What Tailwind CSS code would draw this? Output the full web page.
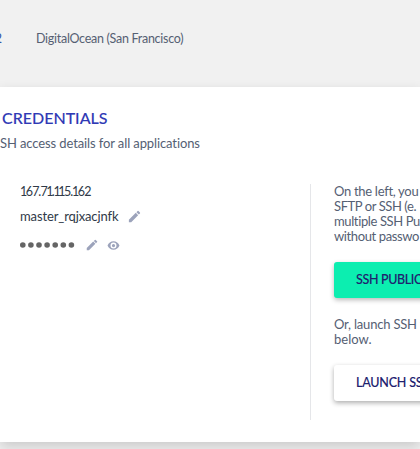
<!DOCTYPE html>
<html lang="en">
<head>
<meta charset="utf-8">
<title>Master Credentials</title>
<script src="https://cdn.jsdelivr.net/npm/@tailwindcss/browser@4"></script>
</head>
<body class="h-[449px] w-[420px] overflow-hidden bg-[#f1f1f1] font-['Lato',sans-serif] text-[13px] leading-[15px] whitespace-nowrap text-[#556073]">
<div class="flex h-screen flex-col overflow-hidden">
  <header class="flex h-[87px] shrink-0 pt-[31px]">
    <div class="flex w-[2px] justify-end text-[#3456a8]">2</div>
    <div class="ml-[34px] text-[12.5px] tracking-[-0.28px]">DigitalOcean (San Francisco)</div>
  </header>
  <main class="h-[355px] shrink-0 bg-white pt-[21px] shadow-[0_5px_12px_rgba(0,0,0,0.16)]">
    <h1 class="ml-[2px] text-[16px] leading-5 font-medium text-[#2f39b5] [-webkit-text-stroke:0.1px_#2f39b5]">CREDENTIALS</h1>
    <p class="mt-[8px] tracking-[-0.11px]">SH access details for all applications</p>
    <div class="mt-[33px] flex h-[236px]">
      <section class="w-[310px] shrink-0 pl-5 text-[#303a48]">
        <div class="h-[25px] text-[12.5px] tracking-[-0.8px]"><span class="tracking-[-1.5px]">1</span>6<span class="tracking-[-1.2px]">7</span>.<span class="tracking-[-1.5px]">7</span><span class="tracking-[-1.7px]">1</span><span class="tracking-[-1.2px]">.</span><span class="tracking-[-2.4px]">1</span><span class="tracking-[-1.7px]">1</span>5<span class="tracking-[-1.2px]">.</span><span class="tracking-[-1.5px]">1</span>62</div>
        <div class="flex h-[28px]">
          <span class="tracking-[-0.12px]">master_rqjxacjnfk</span>
          <svg class="ml-[9px] size-[15px] text-[#9ca3bb]" viewBox="0 0 24 24" fill="currentColor"><path d="M3 17.25V21h3.75L17.81 9.94l-3.75-3.75zM20.71 7.04a1 1 0 0 0 0-1.41l-2.34-2.34a1 1 0 0 0-1.41 0l-1.83 1.83 3.75 3.75z"/></svg>
        </div>
        <div class="flex h-4 items-center">
          <svg class="h-[6px] w-[56px]" viewBox="0 0 56 6" fill="#656565"><circle cx="2.8" cy="3" r="2.8"/><circle cx="10.9" cy="3" r="2.8"/><circle cx="19" cy="3" r="2.8"/><circle cx="27.1" cy="3" r="2.8"/><circle cx="35.2" cy="3" r="2.8"/><circle cx="43.3" cy="3" r="2.8"/><circle cx="51.4" cy="3" r="2.8"/></svg>
          <svg class="ml-[9px] size-[14px] text-[#9ca3bb]" viewBox="0 0 24 24" fill="currentColor"><path d="M3 17.25V21h3.75L17.81 9.94l-3.75-3.75zM20.71 7.04a1 1 0 0 0 0-1.41l-2.34-2.34a1 1 0 0 0-1.41 0l-1.83 1.83 3.75 3.75z"/></svg>
          <svg class="ml-[8px] size-[13px] text-[#9ca3bb]" viewBox="0 0 24 24" fill="currentColor"><path d="M12 4C7 4 2.730 7.400 1 12c1.730 4.600 6 8 11 8s9.270-3.400 11-8c-1.730-4.600-6-8-11-8zM12 17.500a5.500 5.500 0 1 1 0-11 5.500 5.500 0 0 1 0 11zm0-8.500a3 3 0 1 0 0 6 3 3 0 0 0 0-6z"/></svg>
        </div>
      </section>
      <aside class="w-[110px] shrink-0 border-l border-[#e5e6e9] pl-[23px]">
        <p><span class="tracking-[-0.3px]">On the left, you</span><br><span class="tracking-[-0.42px]">SFTP or SSH (e.</span><br><span class="tracking-[-0.38px]">multiple SSH Pu</span><br><span class="tracking-[-0.38px]">without passwo</span></p>
        <button class="mt-[18px] flex h-9 w-[180px] items-center rounded-[3px] bg-[#0ceeb0] pb-[2px] pl-[22px] text-[12.5px] font-medium tracking-[-0.35px] text-[#20206e] shadow-[0_2px_5px_rgba(0,0,0,0.28)] [-webkit-text-stroke:0.1px_#20206e]">SSH PUBLIC KEYS</button>
        <p class="mt-[19px]"><span class="tracking-[-0.2px]">Or, launch SSH t</span><br>below.</p>
        <button class="mt-[18px] flex h-9 w-[180px] items-center rounded-[3px] bg-white pb-[2px] pl-[22px] text-[12.5px] font-medium tracking-[-0.2px] text-[#20206e] shadow-[0_2px_5px_rgba(0,0,0,0.32)] [-webkit-text-stroke:0.1px_#20206e]">LAUNCH SSH</button>
      </aside>
    </div>
  </main>
</div>
</body>
</html>
